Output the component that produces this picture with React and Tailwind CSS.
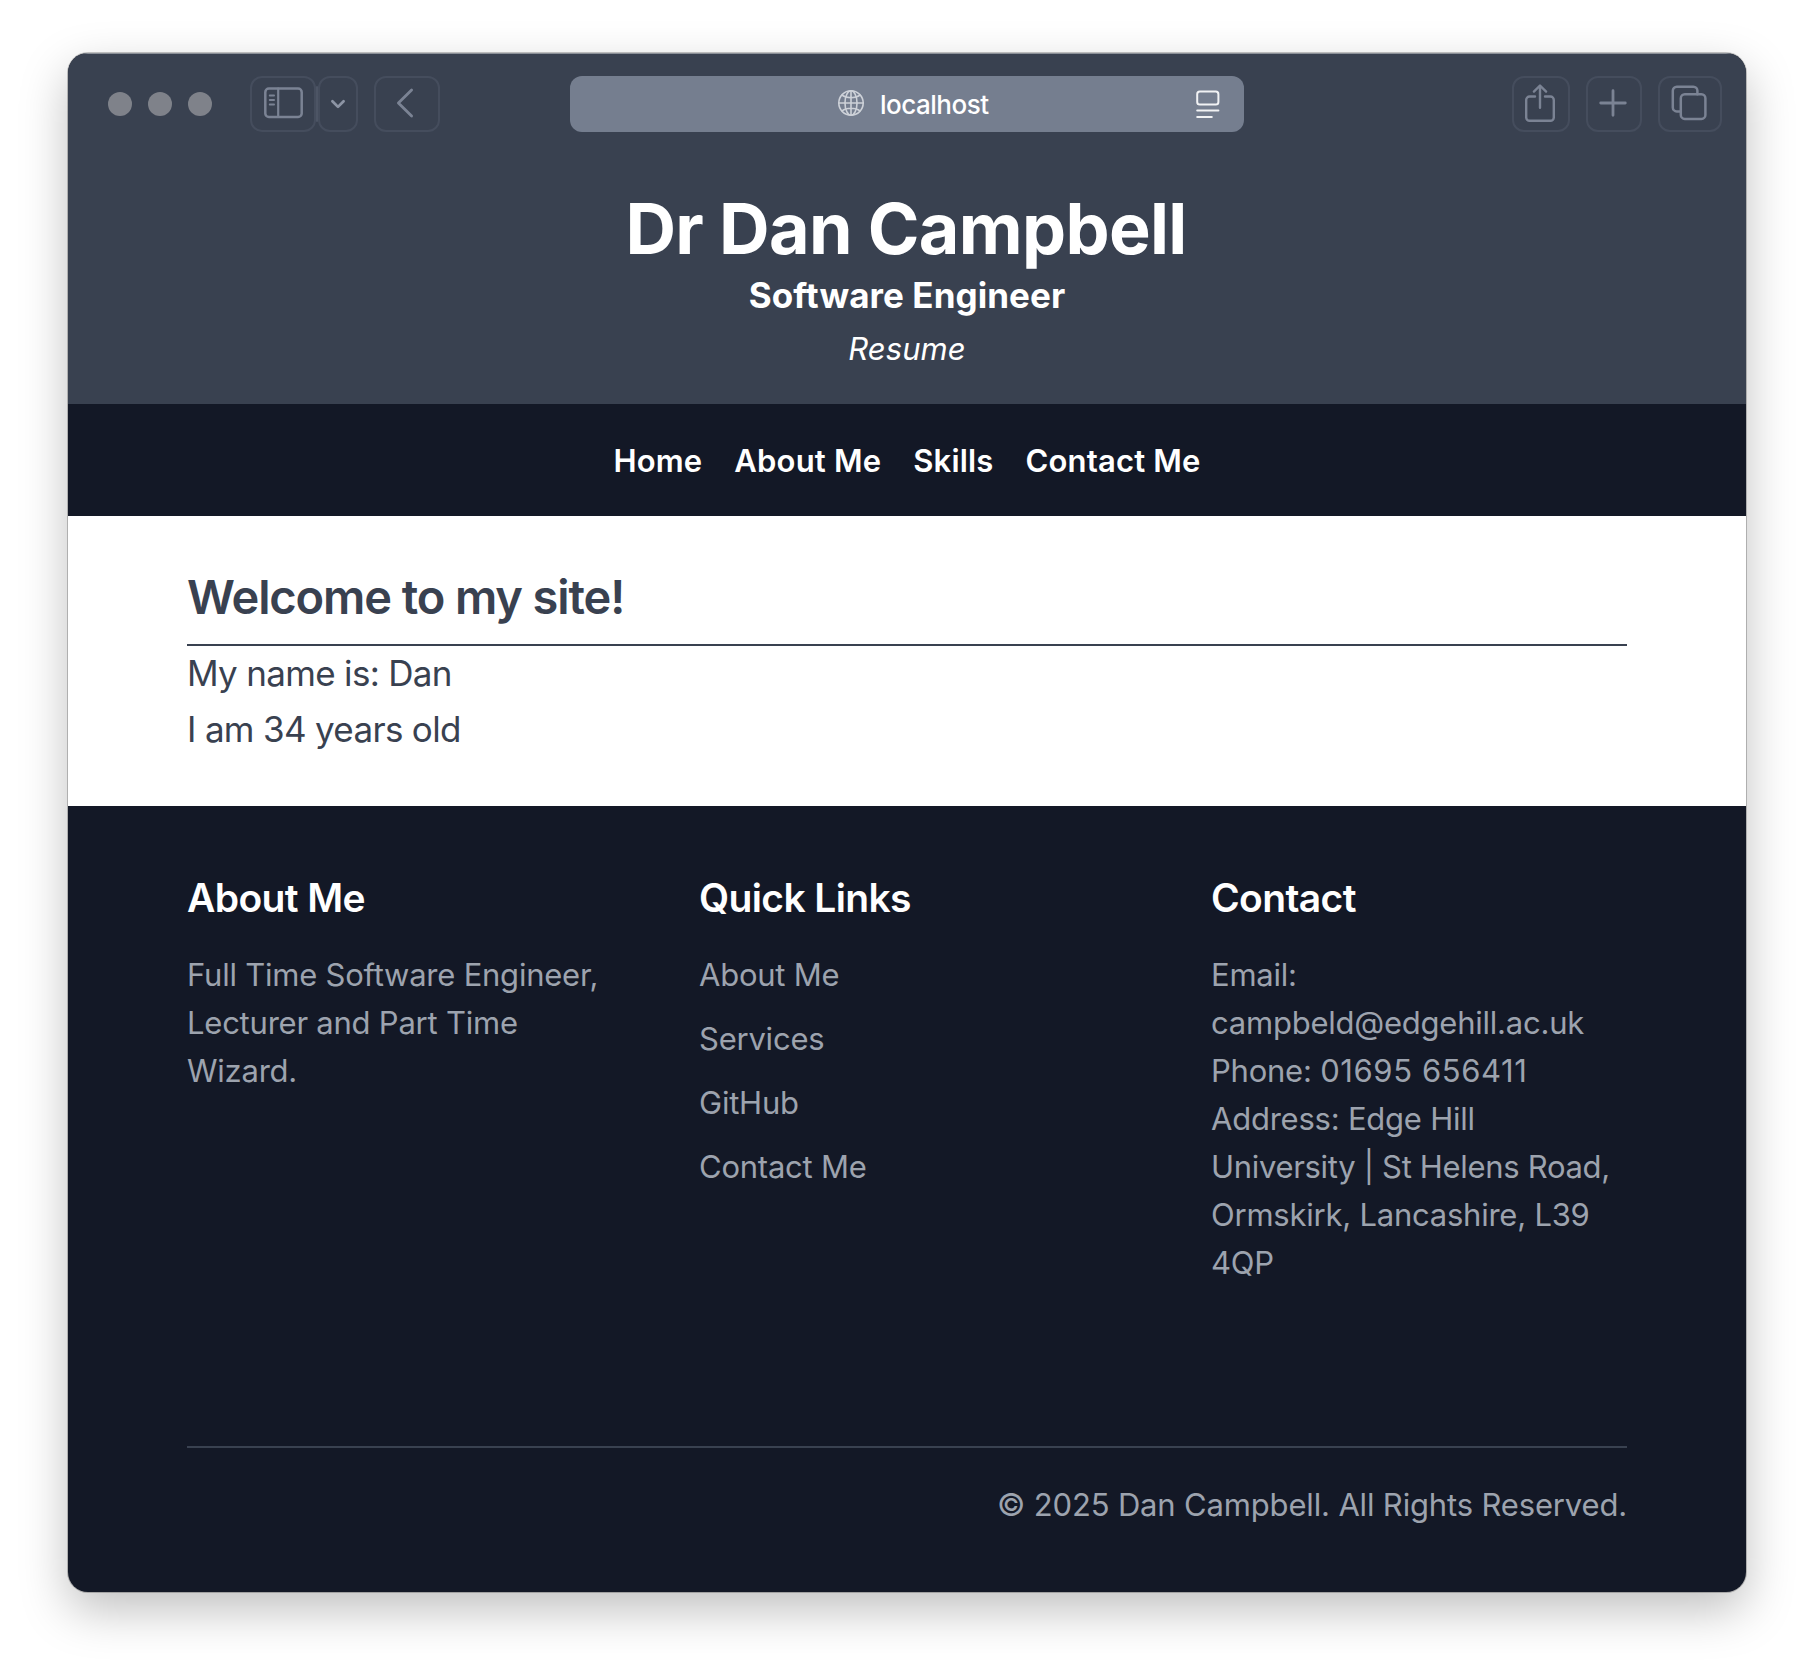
const iconProps = {
  fill: "none",
  stroke: "currentColor",
  strokeLinecap: "round",
  strokeLinejoin: "round",
  "aria-hidden": true,
};

function ToolButton({ label, className, children }) {
  return (
    <button
      aria-label={label}
      className={`flex h-14 shrink-0 items-center justify-center rounded-xl border-2 border-[#454d5d] text-[#7b8394] ${className}`}
    >
      {children}
    </button>
  );
}

function SidebarIcon() {
  return (
    <svg width="40" height="32" viewBox="0 0 40 32" strokeWidth="2.5" {...iconProps}>
      <rect x="1.3" y="1.6" width="36.4" height="28.4" rx="3.6" />
      <path d="M14.2 1.6v28.4" strokeWidth="2.2" />
      <path d="M5.7 8.5h4.4M5.7 13h4.4M5.7 17.5h4.4" strokeWidth="1.8" />
    </svg>
  );
}

function ChevronDownIcon() {
  return (
    <svg width="18" height="12" viewBox="0 0 18 12" strokeWidth="2.7" {...iconProps}>
      <path d="M3.4 3.2 9 8.9l5.6-5.7" />
    </svg>
  );
}

function BackIcon() {
  return (
    <svg width="20" height="32" viewBox="0 0 20 32" strokeWidth="2.8" {...iconProps}>
      <path d="M16.6 3 3.4 16l13.2 13" />
    </svg>
  );
}

function GlobeIcon() {
  return (
    <svg width="28" height="28" viewBox="0 0 28 28" strokeWidth="1.6" {...iconProps}>
      <circle cx="14" cy="14" r="12.2" />
      <ellipse cx="14" cy="14" rx="6" ry="12.2" />
      <path d="M14 1.8v24.4M1.8 14h24.4M5 6.2c4.6 3.4 13.4 3.4 18 0M5 21.8c4.6-3.4 13.4-3.4 18 0" />
    </svg>
  );
}

function ReaderIcon() {
  return (
    <svg width="26" height="30" viewBox="0 0 26 30" strokeWidth="2" {...iconProps}>
      <rect x="2.2" y="1.6" width="21.2" height="13" rx="2.6" />
      <path d="M2.2 20.6h21.2M2.2 27h14.6" />
    </svg>
  );
}

function ShareIcon() {
  return (
    <svg width="32" height="40" viewBox="0 0 32 40" strokeWidth="2.4" {...iconProps}>
      <path d="M11 13.5H5.6a3.4 3.4 0 0 0-3.4 3.4v17.5a3.4 3.4 0 0 0 3.4 3.4h20.8a3.4 3.4 0 0 0 3.4-3.4V16.9a3.4 3.4 0 0 0-3.4-3.4H21" />
      <path d="M16 24.8V2.8M9.9 8.6 16 2.5l6.1 6.1" />
    </svg>
  );
}

function PlusIcon() {
  return (
    <svg width="30" height="30" viewBox="0 0 30 30" strokeWidth="2.8" {...iconProps}>
      <path d="M15 2.7v24.6M2.7 15h24.6" />
    </svg>
  );
}

function TabsIcon() {
  return (
    <svg width="38" height="38" viewBox="0 0 38 38" strokeWidth="2.5" {...iconProps}>
      <rect x="10.8" y="10.3" width="24.6" height="24.6" rx="4" />
      <path d="M10.8 27.4h-4a4 4 0 0 1-4-4V6.8a4 4 0 0 1 4-4h16.6a4 4 0 0 1 4 4v3.5" />
    </svg>
  );
}

function Toolbar() {
  return (
    <div className="flex h-[103px] items-start pt-[23px] pr-6 pl-10">
      <div className="flex h-14 items-center gap-4">
        <span className="size-6 rounded-full bg-[#7f828a]" />
        <span className="size-6 rounded-full bg-[#7f828a]" />
        <span className="size-6 rounded-full bg-[#7f828a]" />
      </div>
      <div className="ml-[38px] flex items-center">
        <ToolButton label="Sidebar" className="w-[66px] pb-0.5 pl-px">
          <SidebarIcon />
        </ToolButton>
        <span className="h-9 w-0.5 shrink-0 rounded-full bg-[#4d5565]" />
        <ToolButton label="Tab groups" className="w-10 text-[#8c94a4]">
          <ChevronDownIcon />
        </ToolButton>
      </div>
      <ToolButton label="Back" className="ml-4 w-[66px] pr-1 pb-0.5">
        <BackIcon />
      </ToolButton>
      <div className="ml-[130px] flex h-14 w-[674px] shrink-0 items-center rounded-xl bg-[#757e8f] pr-[23px] pl-[267px]">
        <span className="pb-0.5 text-[#cdd1d8]">
          <GlobeIcon />
        </span>
        <span className="ml-[15px] pt-0.5 text-[26px] leading-8 font-medium tracking-[-0.5px] text-white">
          localhost
        </span>
        <span className="ml-auto pt-px text-[#f1f2f4]">
          <ReaderIcon />
        </span>
      </div>
      <div className="ml-auto flex gap-4">
        <ToolButton label="Share" className="w-[58px] pr-0.5 pb-0.5">
          <ShareIcon />
        </ToolButton>
        <ToolButton label="New tab" className="w-14 pr-0.5 pb-0.5">
          <PlusIcon />
        </ToolButton>
        <ToolButton label="Tab overview" className="w-16 pr-0.5 pb-0.5">
          <TabsIcon />
        </ToolButton>
      </div>
    </div>
  );
}

const navLinks = ["Home", "About Me", "Skills", "Contact Me"];
const quickLinks = ["About Me", "Services", "GitHub", "Contact Me"];

function FooterHeading({ children }) {
  return (
    <h3 className="mb-[25px] text-[39px] leading-14 font-semibold tracking-[-0.62px] text-white">
      {children}
    </h3>
  );
}

export default function App() {
  return (
    <div className="h-[1676px] w-[1814px] overflow-hidden bg-white px-[68px] pt-[53px] font-['Inter',sans-serif]">
      <div className="h-[1539px] w-[1678px] overflow-hidden rounded-[20px] bg-[#131826] shadow-[0_0_0_1px_rgba(0,0,0,0.22),0_18px_48px_rgba(0,0,0,0.25)]">
        <header className="h-[351px] bg-[#394150] text-center text-white shadow-[inset_0_1px_0_#8b9098]">
          <Toolbar />
          <h1 className="pt-[33px] pr-0.5 text-[70px] leading-20 font-bold tracking-[-0.68px]">Dr Dan Campbell</h1>
          <h2 className="-mt-0.5 text-[35px] leading-14 font-bold tracking-[0.07px]">Software Engineer</h2>
          <p className="mt-0.5 text-[31px] leading-12 tracking-[0.1px] italic">Resume</p>
        </header>

        <nav className="flex h-28 justify-center gap-8 bg-[#131826] pt-[33px] text-[31px] leading-12 font-semibold tracking-[0.18px] text-white">
          {navLinks.map((label) => (
            <a key={label} href="#">
              {label}
            </a>
          ))}
        </nav>

        <main className="h-[290px] bg-white px-[119px] pt-12 text-[#394150]">
          <h2 className="h-[82px] border-b-2 border-[#394150] pt-px text-[47px] leading-16 font-semibold tracking-[-1.12px]">
            Welcome to my site!
          </h2>
          <div className="-mt-px text-[35px] leading-14 tracking-[-0.68px]">
            <p>My name is: Dan</p>
            <p>I am 34 years old</p>
          </div>
        </main>

        <footer className="px-[119px] pt-16 text-[31px] leading-12 tracking-[-0.23px] text-[#9da3ae]">
          <div className="grid h-[578px] grid-cols-3 gap-24 border-b-2 border-[#394150]">
            <section>
              <FooterHeading>About Me</FooterHeading>
              <p>Full Time Software Engineer,</p>
              <p>Lecturer and Part Time</p>
              <p>Wizard.</p>
            </section>
            <section>
              <FooterHeading>Quick Links</FooterHeading>
              <ul className="space-y-4">
                {quickLinks.map((label) => (
                  <li key={label}>
                    <a href="#">{label}</a>
                  </li>
                ))}
              </ul>
            </section>
            <section className="whitespace-nowrap">
              <FooterHeading>Contact</FooterHeading>
              <p>Email:</p>
              <p>campbeld@edgehill.ac.uk</p>
              <p>
                Phone: <span className="tracking-[0.6px]">01695 656411</span>
              </p>
              <p>Address: Edge Hill</p>
              <p className="tracking-[-0.32px]">University | St Helens Road,</p>
              <p>Ormskirk, Lancashire, L39</p>
              <p>4QP</p>
            </section>
          </div>
          <p className="pt-[33px] text-right tracking-[-0.16px]">© 2025 Dan Campbell. All Rights Reserved.</p>
        </footer>
      </div>
    </div>
  );
}
